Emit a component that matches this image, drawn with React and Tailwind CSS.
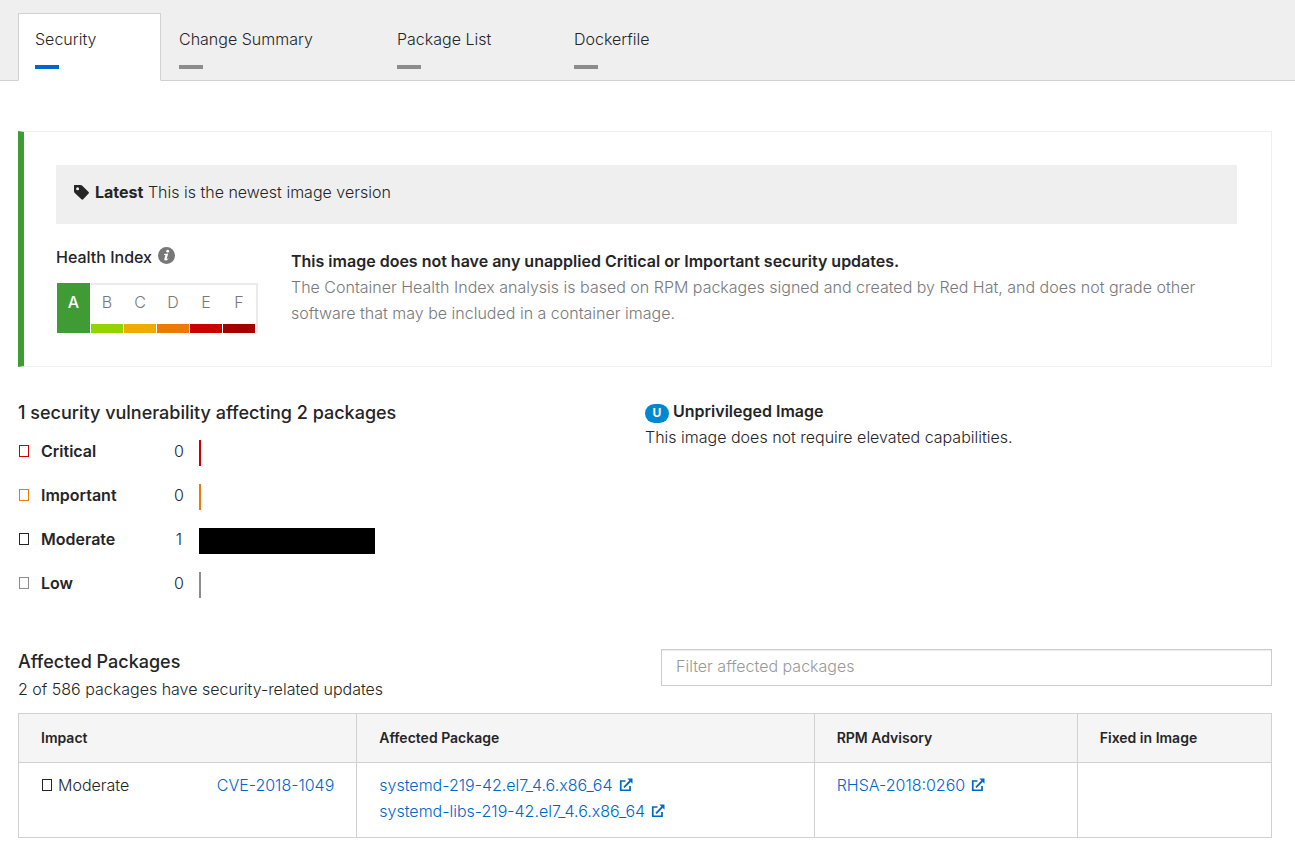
import React, { useState } from "react";

const tabs = [
  { label: "Security", size: "w-[143px]" },
  { label: "Change Summary", size: "w-[217px]" },
  { label: "Package List", size: "w-[176px]" },
  { label: "Dockerfile", size: "w-[160px]" },
];

const grades = [
  { letter: "B", bar: "bg-[#92d400]" },
  { letter: "C", bar: "bg-[#f0ab00]" },
  { letter: "D", bar: "bg-[#ec7a08]" },
  { letter: "E", bar: "bg-[#cc0000]" },
  { letter: "F", bar: "bg-[#a30000]" },
];

const severities = [
  { label: "Critical", count: 0, box: "border-[#cc0000]", bar: "bg-[#cc0000] w-0.5" },
  { label: "Important", count: 0, box: "border-[#ec7a08]", bar: "bg-[#ec7a08] w-0.5" },
  { label: "Moderate", count: 1, box: "border-[#252527]", bar: "bg-black w-44" },
  { label: "Low", count: 0, box: "border-[#8b8d8f]", bar: "bg-[#8b8d8f] w-0.5" },
];

const packages = ["systemd-219-42.el7_4.6.x86_64", "systemd-libs-219-42.el7_4.6.x86_64"];

function TagIcon() {
  return (
    <svg className="mr-1.5 size-[15px]" viewBox="0 0 15 15" fill="currentColor" aria-hidden="true">
      <path
        fillRule="evenodd"
        d="M0.500 0H6.500Q7.500 0 8.300 0.800L14.600 7Q15.300 7.800 14.600 8.600L9.200 14.300Q8.300 15.200 7.400 14.300L0.800 8Q0 7.200 0 6.200V0.500Q0 0 0.500 0ZM3.600 2.200A1.500 1.500 0 1 0 3.600 5.200A1.500 1.500 0 1 0 3.600 2.200Z"
      />
    </svg>
  );
}

function InfoIcon() {
  return (
    <svg className="mb-1 ml-1.5 size-[17px]" viewBox="0 0 17 17" aria-hidden="true">
      <circle cx="8.5" cy="8.500" r="8.500" fill="#777777" />
      <circle cx="9.700" cy="4.200" r="1.400" fill="#ffffff" />
      <path
        d="M6.200 7.100L10.200 6.500L8.800 11.600Q8.700 12.200 9.200 11.900L10.100 11.200L10.500 11.700Q8.900 13.600 7.300 13.600Q5.900 13.500 6.300 12L7.400 8.100L6 7.900Z"
        fill="#ffffff"
      />
    </svg>
  );
}

function ExternalIcon() {
  return (
    <svg className="ml-1.5 inline-block h-3.5 w-3.5 align-[-1px]" viewBox="0 0 14 14" aria-hidden="true">
      <path d="M6.500 3H1.750v9.250h9.250V8" fill="none" stroke="currentColor" strokeWidth="1.700" />
      <path d="M5 9.300L11.300 3" fill="none" stroke="currentColor" strokeWidth="1.800" />
      <path d="M8.300 0.500h5.200V5.700z" fill="currentColor" />
    </svg>
  );
}

function ExternalLink({ children }) {
  return (
    <a href="#" className="text-[#0066cc]">
      {children}
      <ExternalIcon />
    </a>
  );
}

function SeverityBox({ color }) {
  return <span className={"inline-block h-3 w-2.5 border " + color} />;
}

export default function App() {
  const [active, setActive] = useState("Security");
  const [filter, setFilter] = useState("");
  const shown = packages.filter((name) => name.includes(filter));

  return (
    <div className="bg-white font-['Inter','Liberation_Sans',sans-serif] text-base leading-[26px] font-light text-[#252527]">
      <nav className="border-b border-[#d1d1d1] bg-[#efefef] pt-[13px] pl-[18px]">
        <div role="tablist" className="-mb-px flex gap-px">
          {tabs.map(({ label, size }) => (
            <button
              key={label}
              type="button"
              role="tab"
              aria-selected={active === label}
              onClick={() => setActive(label)}
              className={
                "flex h-[68px] flex-col items-start border px-4 pt-3 text-left whitespace-nowrap " +
                size +
                (active === label
                  ? " border-[#d1d1d1] border-b-white bg-white"
                  : " border-transparent")
              }
            >
              {label}
              <span
                className={"mt-[13px] h-1 w-6 " + (active === label ? "bg-[#0066cc]" : "bg-[#8c8c8c]")}
              />
            </button>
          ))}
        </div>
      </nav>

      <main className="pt-[50px] pr-[23px] pl-[18px]">
        <section className="border border-l-[6px] border-[#efefef] border-l-[#3f9c35] py-[33px] pr-[34px] pl-8">
          <p className="flex items-center bg-[#efefef] px-[18px] pt-3.5 pb-[19px]">
            <TagIcon />
            <span>
              <strong className="font-bold">Latest</strong> This is the newest image version
            </span>
          </p>
          <div className="flex pt-5">
            <div className="w-[235px] shrink-0">
              <h2 className="flex items-center font-medium">
                Health Index
                <InfoIcon />
              </h2>
              <div className="mt-[13px] ml-px flex h-[50px] w-[201px] text-center text-[#77797c]">
                <span className="mr-px w-[33px] bg-[#3f9c35] pt-1.5 font-medium text-white">A</span>
                <div className="grid flex-1 grid-cols-5 gap-px border-t-2 border-r-2 border-[#ebebeb] pr-px">
                  {grades.map(({ letter, bar }) => (
                    <span key={letter} className="flex flex-col justify-between pt-1">
                      {letter}
                      <span className={"h-[9px] " + bar} />
                    </span>
                  ))}
                </div>
              </div>
            </div>
            <div className="pt-1">
              <h3 className="font-semibold">
                This image does not have any unapplied Critical or Important security updates.
              </h3>
              <p className="text-[#77797c]">
                The Container Health Index analysis is based on RPM packages signed and created by Red
                Hat, and does not grade other software that may be included in a container image.
              </p>
            </div>
          </div>
        </section>

        <div className="grid grid-cols-2 pt-[31px]">
          <section className="pt-px">
            <h2 className="text-lg leading-7 font-medium">
              1 security vulnerability affecting 2 packages
            </h2>
            <ul className="flex flex-col gap-[18px] pt-[13px]">
              {severities.map(({ label, count, box, bar }) => (
                <li key={label} className="flex items-start leading-[22px]">
                  <span className="flex h-[22px] w-[23px] items-center pl-px">
                    <SeverityBox color={box} />
                  </span>
                  <span className="w-[130px] font-semibold">{label}</span>
                  <span className="w-4 text-center">{count}</span>
                  <span className={"ml-3 h-[26px] " + bar} />
                </li>
              ))}
            </ul>
          </section>
          <section>
            <h2 className="flex items-center font-semibold">
              <span className="mt-1 mr-1 flex h-[19px] w-6 items-center justify-center rounded-full bg-[#0088ce] text-xs font-bold text-white">
                U
              </span>
              Unprivileged Image
            </h2>
            <p>This image does not require elevated capabilities.</p>
          </section>
        </div>

        <div className="grid grid-cols-2 pt-[50px]">
          <div>
            <h2 className="text-lg leading-7 font-medium">Affected Packages</h2>
            <p>2 of 586 packages have security-related updates</p>
          </div>
          <div className="pt-px pl-4">
            <input
              type="text"
              aria-label="Filter affected packages"
              placeholder="Filter affected packages"
              value={filter}
              onChange={(e) => setFilter(e.target.value)}
              className="h-[37px] w-full border border-[#cccccc] px-3.5 pb-1 shadow-[inset_0_1px_1px_rgba(0,0,0,0.075)] placeholder:text-[#999999]"
            />
          </div>
        </div>

        <table className="mt-[11px] w-full table-fixed border-collapse border border-[#d1d1d1] text-left">
          <thead className="bg-[#f5f5f5] text-sm leading-6">
            <tr className="h-[49px]">
              <th className="w-[27%] border border-[#d1d1d1] px-[22px] font-semibold">Impact</th>
              <th className="w-[36.5%] border border-[#d1d1d1] px-[22px] font-semibold">
                Affected Package
              </th>
              <th className="w-[21%] border border-[#d1d1d1] px-[22px] font-semibold">RPM Advisory</th>
              <th className="border border-[#d1d1d1] px-[22px] font-semibold">Fixed in Image</th>
            </tr>
          </thead>
          <tbody>
            <tr className="h-[75px] align-top">
              <td className="border border-[#d1d1d1] px-[22px] pt-[9px]">
                <div className="flex items-center justify-between">
                  <span className="flex items-center gap-1.5 pl-px">
                    <SeverityBox color="border-[#252527]" />
                    Moderate
                  </span>
                  <a href="#" className="text-[#0066cc]">
                    CVE-2018-1049
                  </a>
                </div>
              </td>
              <td className="border border-[#d1d1d1] px-[22px] pt-[9px]">
                {shown.map((name) => (
                  <div key={name}>
                    <ExternalLink>{name}</ExternalLink>
                  </div>
                ))}
              </td>
              <td className="border border-[#d1d1d1] px-[22px] pt-[9px]">
                <ExternalLink>RHSA-2018:0260</ExternalLink>
              </td>
              <td className="border border-[#d1d1d1] px-[22px] pt-[9px]" />
            </tr>
          </tbody>
        </table>
      </main>
    </div>
  );
}
